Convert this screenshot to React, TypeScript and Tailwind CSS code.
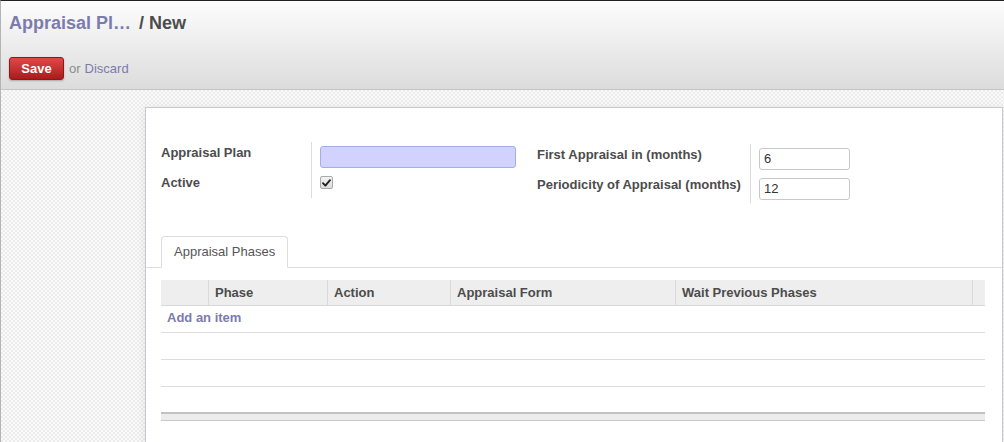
import React from "react";

const Check = () => (
  <span className="flex h-[13px] w-[13px] items-center justify-center rounded-[2px] border border-[#a9a9a9] bg-linear-to-b from-[#f4f4f4] to-[#dcdcdc]">
    <svg width="9" height="8" viewBox="0 0 9 8">
      <path d="M1 4.2 L3.4 6.6 L8 1.2" stroke="#222" strokeWidth="1.9" fill="none" strokeLinecap="round" strokeLinejoin="round" />
    </svg>
  </span>
);

export default function App() {
  const cols = ["", "Phase", "Action", "Appraisal Form", "Wait Previous Phases", ""];
  return (
    <div className="flex h-[442px] w-[1004px] flex-col overflow-hidden border-l border-t border-l-[#b4b4b4] border-t-[#222] font-['Liberation_Sans',Arial,sans-serif] text-[13px] text-[#4c4c4c]">
      {/* header */}
      <div className="h-[89px] shrink-0 border-b border-[#c4c4c4] bg-linear-to-b from-[#fdfdfd] to-[#dcdcdc] pl-[8px]">
        <div className="flex items-baseline pt-[11px] text-[18px] font-bold leading-[22px]">
          <span className="text-[#7c7bad]">Appraisal Pl…</span>
          <span className="ml-[8px] text-[#4c4c4c]">/ New</span>
        </div>
        <div className="mt-[23px] flex items-center">
          <button className="flex h-[23px] w-[55px] items-center justify-center rounded-[3px] border border-[#8f1717] bg-linear-to-b from-[#e04848] to-[#a81b1b] text-[13px] font-bold text-white shadow-[0_1px_2px_rgba(0,0,0,0.25)]">
            Save
          </button>
          <span className="ml-[5px] text-[#8c8c8c]">or</span>
          <span className="ml-[4px] text-[#7c7bad]">Discard</span>
        </div>
      </div>

      {/* body */}
      <div className="flex-1 bg-[#f6f6f6] bg-[image:repeating-conic-gradient(#ececec_0%_25%,#fafafa_0%_50%)] bg-[length:4px_4px] pt-[17px]">
        <div className="ml-[144px] h-[400px] w-[858px] border border-[#c8c8d0] bg-white pl-[15px] pr-[16px] pt-[34px] shadow-[0_2px_10px_rgba(0,0,0,0.08)]">
          {/* groups */}
          <div className="flex items-start">
            <div className="grid grid-cols-[150px_204px]">
              <div className="h-[30px] pt-[3px] font-bold leading-[16px]">Appraisal Plan</div>
              <div className="h-[30px] border-l border-[#dcdcdc] pl-[8px] pt-[4px]">
                <div className="h-[22px] w-[196px] rounded-[3px] border border-[#9fb0e4] bg-[#d2d2ff]" />
              </div>
              <div className="h-[26px] pt-[3px] font-bold leading-[16px]">Active</div>
              <div className="h-[26px] border-l border-[#dcdcdc] pl-[8px] pt-[4px]">
                <Check />
              </div>
            </div>
            <div className="ml-[22px] mt-[2px] grid grid-cols-[213px_100px]">
              <div className="h-[30px] pt-[3px] font-bold leading-[16px]">First Appraisal in (months)</div>
              <div className="h-[30px] border-l border-[#dcdcdc] pl-[8px] pt-[4px]">
                <div className="flex h-[22px] w-[91px] items-center rounded-[3px] border border-[#c8c8c8] bg-white pl-[4px] text-[#333]">6</div>
              </div>
              <div className="h-[29px] pt-[3px] font-bold leading-[16px]">Periodicity of Appraisal (months)</div>
              <div className="h-[29px] border-l border-[#dcdcdc] pl-[8px] pt-[4px]">
                <div className="flex h-[22px] w-[91px] items-center rounded-[3px] border border-[#c8c8c8] bg-white pl-[4px] text-[#333]">12</div>
              </div>
            </div>
          </div>

          {/* tabs */}
          <div className="-ml-[15px] -mr-[16px] mt-[33px] flex border-b border-[#dddddd] pl-[15px]">
            <div className="-mb-px flex h-[32px] items-center rounded-t-[4px] border border-[#dddddd] border-b-white bg-white px-[12px] text-[#555]">
              Appraisal Phases
            </div>
          </div>

          {/* table */}
          <div className="mt-[12px] w-[824px]">
            <div className="grid h-[26px] grid-cols-[47px_119px_123px_225px_297px_13px] border-b border-[#d8d8d8] bg-[#eeeeee] font-bold">
              {cols.map((c, i) => (
                <div key={i} className={`flex items-center pl-[6px] ${i > 0 ? "border-l border-[#dadada]" : ""}`}>
                  {c}
                </div>
              ))}
            </div>
            <div className="flex h-[27px] items-center border-b border-[#dddddd] pb-[2px] pl-[6px] font-bold text-[#7c7bad]">
              Add an item
            </div>
            <div className="h-[27px] border-b border-[#dddddd]" />
            <div className="h-[27px] border-b border-[#dddddd]" />
            <div className="h-[25px]" />
            <div className="h-[9px] border-b border-t-2 border-b-[#c8c8c8] border-t-[#c2c2c2] bg-[#ececec]" />
          </div>
        </div>
      </div>
    </div>
  );
}
